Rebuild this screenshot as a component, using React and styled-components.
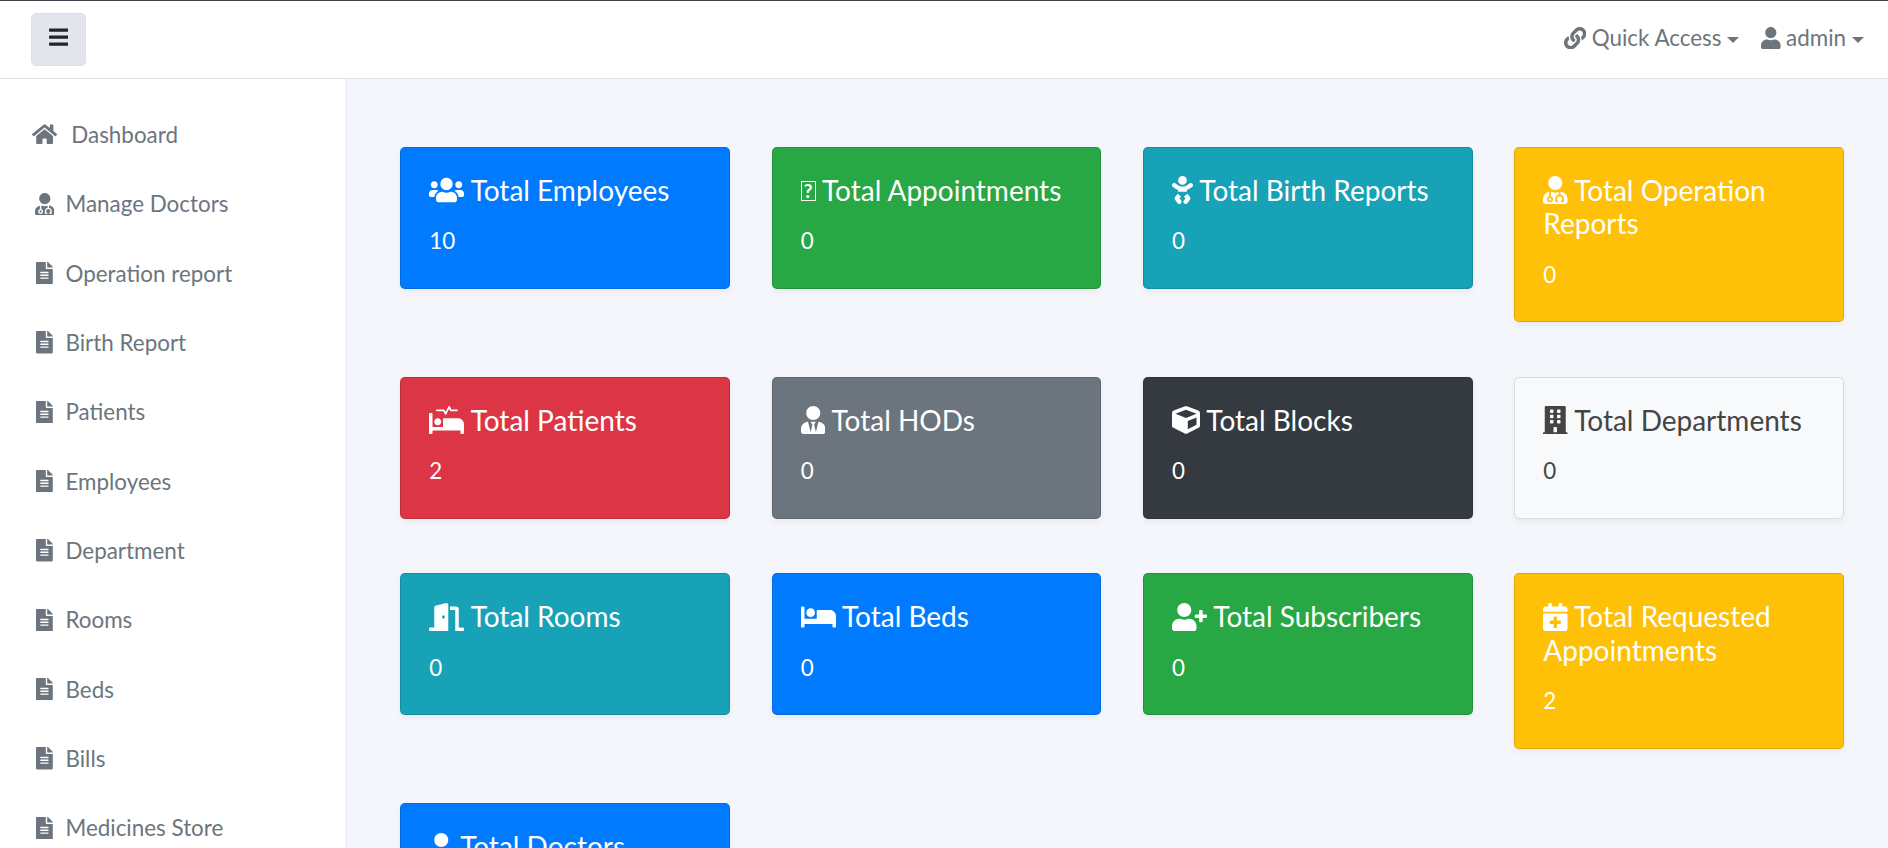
import React from 'react';
import styled, { createGlobalStyle } from 'styled-components';
import {
  FaBars, FaLink, FaUser, FaHome, FaUserMd, FaFileAlt, FaUsers, FaBaby, FaProcedures,
  FaUserTie, FaCube, FaBuilding, FaDoorOpen, FaBed, FaUserPlus, FaCalendarPlus,
} from 'react-icons/fa';

const GlobalStyle = createGlobalStyle`
  *, *::before, *::after { box-sizing: border-box; }
  body {
    margin: 0;
    height: 100vh;
    overflow: hidden;
    background: #f4f6fb;
    color: #495057;
    font-family: Lato, "Liberation Sans", sans-serif;
    font-size: 22.4px;
    line-height: 33.6px;
  }
`;

const Page = styled.div`
  height: 100vh;
  display: flex;
  flex-direction: column;
  overflow: hidden;
`;

/* Each glyph keeps its own advance width, given in 1/512 em. */
const Glyph = styled.span`
  svg {
    width: ${(p) => p.$units / 512}em;
    height: 1em;
    vertical-align: -0.125em;
  }
`;

const Header = styled.header`
  flex: none;
  height: 79px;
  padding: 0 24px 0 31px;
  display: flex;
  align-items: center;
  justify-content: space-between;
  background: #fff;
  border-top: 1px solid #3f3d49;
  border-bottom: 1px solid #e4e5e9;
`;

const MenuButton = styled.button`
  width: 55px;
  height: 53px;
  padding: 0 0 1px;
  display: flex;
  align-items: center;
  justify-content: center;
  border: 1px solid #dae0e5;
  border-radius: 5px;
  background: #e2e6ea;
  color: #212529;
  font-size: 22.4px;
`;

const HeaderLinks = styled.nav`
  display: flex;
  gap: 21.5px;
  padding-bottom: 3px;
`;

const HeaderLink = styled.a`
  display: flex;
  align-items: center;
  color: #6c757d;

  ${Glyph} { margin-right: 5.5px; }
`;

const Caret = styled.span`
  margin: 4px 0 0 6px;
  border: 6px solid transparent;
  border-top: 6.5px solid;
  border-bottom: 0;
`;

const Body = styled.div`
  flex: 1;
  min-height: 0;
  display: flex;
`;

const Sidebar = styled.aside`
  flex: none;
  width: 347px;
  padding: 21px 0 0 30.5px;
  background: #fff;
  border-right: 1px solid #e6e9f6;
`;

const NavItem = styled.a`
  height: 69.35px;
  display: flex;
  align-items: center;
  gap: ${(p) => (p.$wide ? '12.8px' : '7px')};
  color: #6c757d;
`;

const NavIcon = styled.span`
  width: 28px;
  display: flex;
  justify-content: center;
`;

const Main = styled.main`
  flex: 1;
  padding: 67.85px 44px 0 53.3px;
`;

const CardGrid = styled.div`
  display: grid;
  grid-template-columns: repeat(4, 1fr);
  column-gap: 41.7px;
  row-gap: 54.5px;
  align-items: start;
`;

const Card = styled.section`
  padding: 25.9px 28px 30.1px;
  border: 1px solid ${(p) => (p.$light ? '#d9dbdf' : 'rgba(0, 0, 0, 0.125)')};
  border-radius: 5px;
  background: ${(p) => p.$bg};
  color: ${(p) => (p.$light ? '#444' : '#fff')};
  box-shadow: 0 3px 6px rgba(0, 0, 0, 0.05);
`;

const CardTitle = styled.h5`
  margin: 0 0 16.8px;
  font-size: 28px;
  font-weight: 400;
  line-height: 33.6px;
`;

const CardCount = styled.p`
  margin: 0;
`;

const MissingGlyph = styled.span`
  display: inline-block;
  width: 15px;
  height: 20px;
  border: 1px solid currentColor;
  font-size: 19px;
  font-weight: 700;
  line-height: 18px;
  text-align: center;
  vertical-align: 2.6px;
`;

const navItems = [
  ['Dashboard', FaHome, 576],
  ['Manage Doctors', FaUserMd, 448],
  ['Operation report', FaFileAlt, 384],
  ['Birth Report', FaFileAlt, 384],
  ['Patients', FaFileAlt, 384],
  ['Employees', FaFileAlt, 384],
  ['Department', FaFileAlt, 384],
  ['Rooms', FaFileAlt, 384],
  ['Beds', FaFileAlt, 384],
  ['Bills', FaFileAlt, 384],
  ['Medicines Store', FaFileAlt, 384],
];

const colors = {
  primary: '#007bff',
  success: '#28a745',
  info: '#17a2b8',
  warning: '#ffc107',
  danger: '#dc3545',
  secondary: '#6c757d',
  dark: '#343a40',
  light: '#f8f9fa',
};

const cards = [
  ['Total Employees', 10, 'primary', FaUsers, 640],
  ['Total Appointments', 0, 'success', null, 0],
  ['Total Birth Reports', 0, 'info', FaBaby, 384],
  ['Total Operation Reports', 0, 'warning', FaUserMd, 448],
  ['Total Patients', 2, 'danger', FaProcedures, 640],
  ['Total HODs', 0, 'secondary', FaUserTie, 448],
  ['Total Blocks', 0, 'dark', FaCube, 512],
  ['Total Departments', 0, 'light', FaBuilding, 448],
  ['Total Rooms', 0, 'info', FaDoorOpen, 640],
  ['Total Beds', 0, 'primary', FaBed, 640],
  ['Total Subscribers', 0, 'success', FaUserPlus, 640],
  ['Total Requested Appointments', 2, 'warning', FaCalendarPlus, 448],
  ['Total Doctors', 0, 'primary', FaUserMd, 448],
];

export default function App() {
  return (
    <Page>
      <GlobalStyle />
      <Header>
        <MenuButton aria-label="Menu"><Glyph $units={448}><FaBars /></Glyph></MenuButton>
        <HeaderLinks>
          <HeaderLink><Glyph $units={512}><FaLink /></Glyph>Quick Access<Caret /></HeaderLink>
          <HeaderLink><Glyph $units={448}><FaUser /></Glyph>admin<Caret /></HeaderLink>
        </HeaderLinks>
      </Header>
      <Body>
        <Sidebar>
          {navItems.map(([label, Icon, units], i) => (
            <NavItem key={label} $wide={i === 0}>
              <NavIcon><Glyph $units={units}><Icon /></Glyph></NavIcon>
              {label}
            </NavItem>
          ))}
        </Sidebar>
        <Main>
          <CardGrid>
            {cards.map(([title, count, tone, Icon, units]) => (
              <Card key={title} $bg={colors[tone]} $light={tone === 'light'}>
                <CardTitle>
                  {Icon ? <Glyph $units={units}><Icon /></Glyph> : <MissingGlyph>?</MissingGlyph>} {title}
                </CardTitle>
                <CardCount>{count}</CardCount>
              </Card>
            ))}
          </CardGrid>
        </Main>
      </Body>
    </Page>
  );
}
